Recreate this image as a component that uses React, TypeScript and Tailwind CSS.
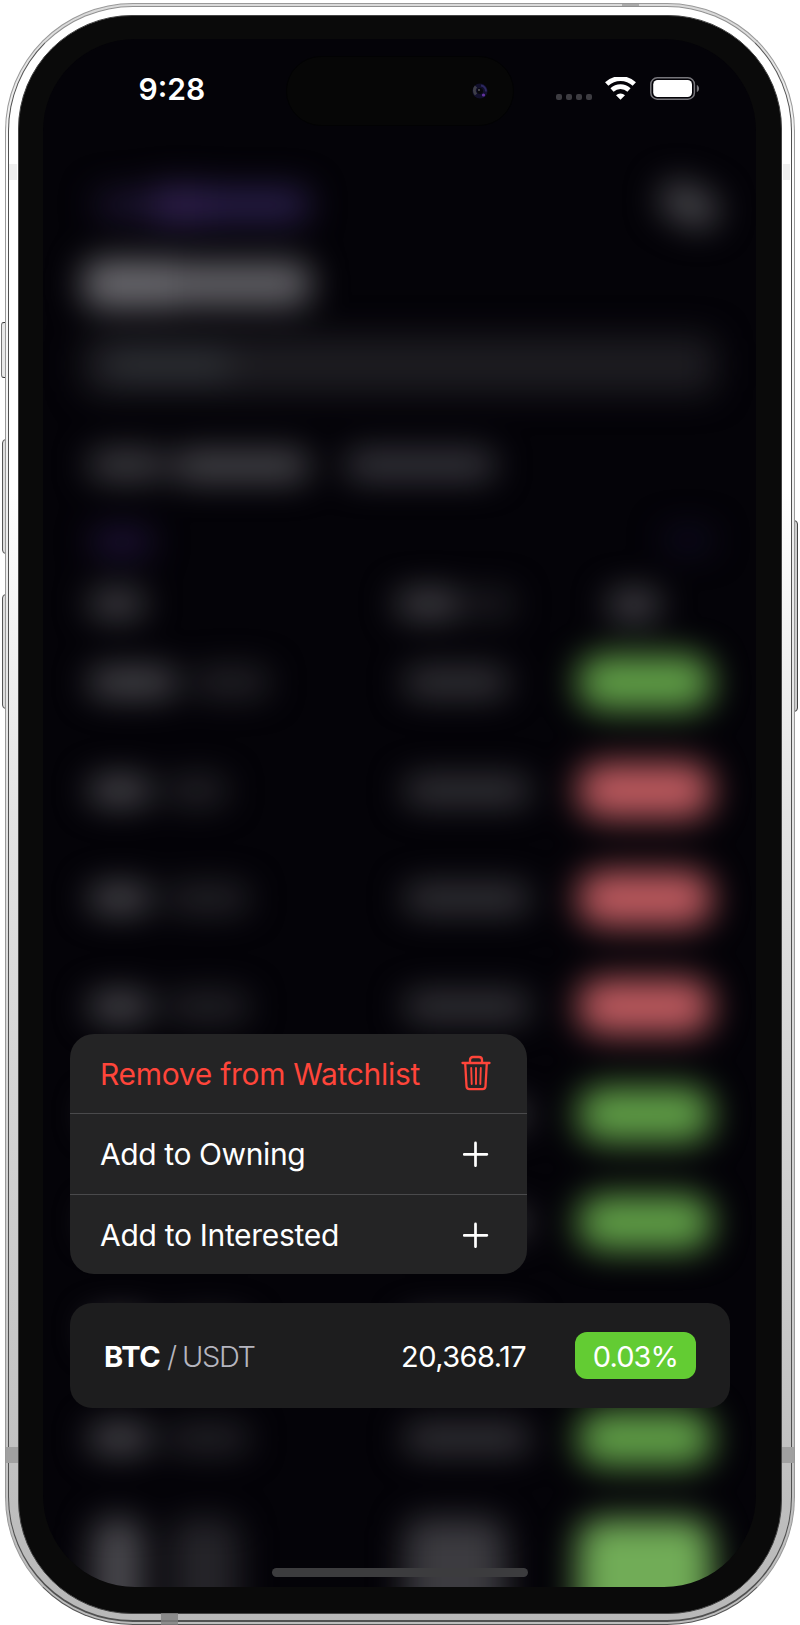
import React from "react";

const rows = [
  { a: "w-[88px]", b: "w-[76px]", p: "w-[104px]", pill: "bg-[#609e47]" },
  { a: "w-[62px]", b: "w-[60px]", p: "w-[126px]", pill: "bg-[#bd5a5f]" },
  { a: "w-[62px]", b: "w-[82px]", p: "w-[126px]", pill: "bg-[#bd5a5f]" },
  { a: "w-[62px]", b: "w-[82px]", p: "w-[126px]", pill: "bg-[#bd5a5f]" },
  { a: "w-[62px]", b: "w-[82px]", p: "w-[126px]", pill: "bg-[#609e47]" },
  { a: "w-[62px]", b: "w-[82px]", p: "w-[126px]", pill: "bg-[#609e47]" },
  { a: "w-[62px]", b: "w-[82px]", p: "w-[126px]", pill: "bg-transparent" },
  { a: "w-[62px]", b: "w-[82px]", p: "w-[126px]", pill: "bg-[#609e47]" },
];

function Market({ a, b, p, pill }: { a: string; b: string; p: string; pill: string }) {
  return (
    <div className="flex h-[108px] shrink-0 items-center pl-[46px]">
      <div className="flex w-[315px] gap-4">
        <div className={`h-[27px] rounded-xl bg-[#4f4e53] ${a}`} />
        <div className={`h-[27px] rounded-xl bg-[#27262b] ${b}`} />
      </div>
      <div className="w-[174px]">
        <div className={`h-[27px] rounded-xl bg-[#3a393e] ${p}`} />
      </div>
      <div className={`h-[55px] w-[134px] rounded-[24px] ${pill}`} />
    </div>
  );
}

function Backdrop() {
  return (
    <div className="flex h-[1700px] w-[713px] flex-col blur-[17px]">
      <div className="mt-[144px] flex h-[44px] items-center justify-between pl-[52px] pr-[37px]">
        <div className="flex h-[36px] w-[215px] items-center">
          <div className="h-[28px] w-[60px] rounded-l-2xl bg-[#1c1430]" />
          <div className="h-[38px] w-[56px] bg-[#2f204e]" />
          <div className="h-[34px] w-[106px] rounded-r-2xl bg-[#291e4a]" />
        </div>
        <div className="h-[36px] w-[60px] rotate-[25deg] rounded-2xl bg-[#47464b]" />
      </div>
      <div className="mt-[34px] flex h-[46px] items-center pl-[40px]">
        <div className="h-[48px] w-[92px] rounded-l-2xl bg-[#6b6a6f]" />
        <div className="h-[44px] w-[136px] rounded-r-2xl bg-[#636267]" />
      </div>
      <div className="mt-[29px] ml-[40px] h-[58px] w-[632px] rounded-xl bg-[#1d1c21] pl-[24px] pt-[16px]">
        <div className="h-[26px] w-[124px] rounded-xl bg-[#2f3237]" />
      </div>
      <div className="mt-[57px] flex h-[28px] gap-[36px] pl-[46px]">
        <div className="flex gap-2">
          <div className="h-[28px] w-[76px] rounded-xl bg-[#434247]" />
          <div className="h-[30px] w-[136px] rounded-xl bg-[#4b4a4f]" />
        </div>
        <div className="h-[28px] w-[150px] rounded-xl bg-[#3c3b42]" />
      </div>
      <div className="mt-[50px] flex h-[26px] justify-between pl-[48px] pr-[43px]">
        <div className="h-[26px] w-[62px] rounded-xl bg-[#1f1339]" />
        <div className="h-[22px] w-[50px] rounded-xl bg-[#0f0b22]" />
      </div>
      <div className="mt-[36px] flex h-[26px] pl-[46px]">
        <div className="h-[26px] w-[56px] rounded-xl bg-[#49484d]" />
        <div className="ml-[251px] h-[26px] w-[66px] rounded-xl bg-[#49484d]" />
        <div className="ml-[8px] h-[26px] w-[44px] rounded-xl bg-[#222126]" />
        <div className="ml-[94px] h-[28px] w-[52px] rounded-xl bg-[#49484d]" />
      </div>
      <div className="mt-[11px]">
        {rows.map((r, i) => (
          <Market key={i} {...r} />
        ))}
        <div className="flex pl-[50px] pt-[27px]">
          <div className="h-[110px] w-[50px] rounded-t-2xl bg-[#4a494e]" />
          <div className="ml-[28px] h-[110px] w-[68px] rounded-t-2xl bg-[#252429]" />
          <div className="ml-[166px] h-[110px] w-[100px] rounded-t-2xl bg-[#3c3b40]" />
          <div className="ml-[73px] h-[130px] w-[134px] rounded-[22px] bg-[#71ac57]" />
        </div>
      </div>
    </div>
  );
}

function Plus() {
  return (
    <svg className="h-[26px] w-[26px]" viewBox="0 0 26 26" fill="none" stroke="#fff" strokeWidth="2.7" strokeLinecap="round">
      <path d="M12.500 1.900v22.800M1.100 13.300h22.800" />
    </svg>
  );
}

function Trash() {
  return (
    <svg className="h-[36px] w-[30px] -translate-y-px" viewBox="0 0 30 36" fill="none" stroke="#ff453a" strokeWidth="2.3" strokeLinecap="round" strokeLinejoin="round">
      <path d="M1.500 8h27M9 7.600V5c0-1.900 1-3 3-3h6c2 0 3 1.100 3 3v2.600" />
      <path d="M4.200 8.200l1.300 23c.1 1.900 1.200 2.900 3 2.900h13c1.800 0 2.900-1 3-2.900l1.300-23" />
      <path d="M10.200 13l.5 16M15 13v16M19.800 13l-.5 16" strokeWidth="1.900" />
    </svg>
  );
}

export default function App() {
  return (
    <div className="relative h-[1625px] w-[800px] overflow-hidden bg-white font-['Inter',sans-serif]">
      <div className="absolute left-[1px] top-[322px] h-[56px] w-[6px] rounded-l-[3px] border border-[#777] border-y-[#333] bg-[#e8e8e8]" />
      <div className="absolute left-[2px] top-[439px] h-[115px] w-[6px] rounded-l-[4px] border border-[#555] bg-[#ddd]" />
      <div className="absolute left-[2px] top-[594px] h-[115px] w-[6px] rounded-l-[4px] border border-[#555] bg-[#ddd]" />
      <div className="absolute left-[793px] top-[520px] h-[192px] w-[5px] rounded-r-[4px] border border-[#444] bg-[#ccc]" />

      <div className="relative mx-auto flex h-[1622px] w-[790px] translate-y-[3px] rounded-[128px] border border-[#999] border-b-[#555] bg-linear-to-b from-[#dadada] from-1% via-white via-10% to-[#bcbcbc] to-100% p-[2px]">
        <div className="flex flex-1 rounded-[125px] border border-b-2 border-[#505050] border-t-[#909090] bg-linear-to-b from-white from-30% via-[#e3e3e3] via-50% to-[#b8b8b8] px-[9px] pb-[6px] pt-[8px]">
          <div className="flex flex-1 rounded-[114px] border border-[#444] bg-[#0a0a0a] px-[24px] pb-[25px] pt-[23px]">
            <div className="relative h-[1548px] w-[713px] overflow-hidden rounded-[92px] bg-[#040308]">
              <Backdrop />
            </div>
          </div>
        </div>
      </div>

      <div className="absolute left-[9px] top-[164px] h-[16px] w-[8px] bg-[#efefef]" />
      <div className="absolute left-[783px] top-[164px] h-[16px] w-[7px] bg-[#efefef]" />
      <div className="absolute left-[6px] top-[1447px] h-[16px] w-[12px] bg-[#a0a0a0]" />
      <div className="absolute left-[782px] top-[1447px] h-[16px] w-[12px] bg-[#a0a0a0]" />
      <div className="absolute left-[161px] top-[1613px] h-[12px] w-[17px] bg-[#808080]/80" />
      <div className="absolute left-[622px] top-[4px] h-[2px] w-[17px] bg-[#aaa]" />

      <div className="absolute left-[286px] top-[56px] flex h-[70px] w-[228px] items-center justify-end rounded-full border border-[#020203] bg-[#060606] pr-[25px]">
        <svg className="h-[16px] w-[16px]" viewBox="0 0 16 16">
          <circle cx="8" cy="8" r="7.600" fill="#12102c" />
          <path d="M9 2.500a6 6 0 0 1 5 6" stroke="#2d2860" strokeWidth="2" fill="none" />
          <path d="M4 3.500a6 6 0 0 0 0 8" stroke="#3e3e48" strokeWidth="3" fill="none" />
          <circle cx="8" cy="8" r="3" fill="#08080c" />
          <circle cx="7" cy="7" r="1" fill="#55555c" />
          <circle cx="11.500" cy="12" r="1.600" fill="#6332a0" />
        </svg>
      </div>

      <div className="absolute left-[138.500px] top-[71px] text-[30px] leading-[36px] font-semibold text-white">9:28</div>
      <div className="absolute left-[556px] top-[76px] flex h-[25px] items-start">
        <div className="mt-[18px] flex gap-[4px]">
          <i className="h-[6px] w-[6px] rounded-[2px] bg-[#3d3c41]" />
          <i className="h-[6px] w-[6px] rounded-[2px] bg-[#3d3c41]" />
          <i className="h-[6px] w-[6px] rounded-[2px] bg-[#3d3c41]" />
          <i className="h-[6px] w-[6px] rounded-[2px] bg-[#3d3c41]" />
        </div>
        <svg className="ml-[13px] mt-px h-[23px] w-[31px]" viewBox="0 0 31 23" fill="none" stroke="#fff">
          <path d="M1.700 7.100a20 20 0 0 1 27.600 0" strokeWidth="4.800" />
          <path d="M7 12.900a12.600 12.600 0 0 1 17 0" strokeWidth="4.700" />
          <path d="M15.500 22.800l-4.500-4.600a6.600 6.600 0 0 1 9 0z" fill="#fff" stroke="none" />
        </svg>
        <svg className="ml-[14px] mt-px h-[23px] w-[50px]" viewBox="0 0 50 23">
          <rect x=".8" y=".8" width="43.600" height="21.400" rx="6.500" fill="none" stroke="#77767b" strokeWidth="1.500" />
          <rect x="3.200" y="3" width="38.800" height="17" rx="4.500" fill="#fff" />
          <path d="M46.800 8c3 1 3 6 0 7z" fill="#77767b" />
        </svg>
      </div>

      <div className="absolute left-[70px] top-[1034px] flex h-[240px] w-[457px] flex-col rounded-[24px] bg-[#242425] text-[30px] text-white">
        <div className="flex h-[80px] items-center justify-between border-b border-[#4a4a4c] pl-[30px] pr-[36px] text-[#ff453a]">
          <span className="translate-y-px tracking-[-0.3px]">Remove from Watchlist</span>
          <Trash />
        </div>
        <div className="flex h-[81px] items-center justify-between border-b border-[#4a4a4c] pl-[30px] pr-[38px]">
          <span className="tracking-[-0.4px]">Add to Owning</span>
          <Plus />
        </div>
        <div className="flex h-[79px] items-center justify-between pl-[30px] pr-[38px]">
          <span className="translate-y-px tracking-[-0.3px]">Add to Interested</span>
          <Plus />
        </div>
      </div>

      <div className="absolute left-[70px] top-[1303px] flex h-[105px] w-[660px] items-center rounded-[22px] bg-[#1d1d1e] pl-[34px] text-[29px] text-white">
        <span className="w-[63px] translate-y-px font-bold tracking-[-0.4px]">BTC</span>
        <span className="w-[15px] translate-y-px font-light text-[#b5b5bf]">/</span>
        <span className="w-[185px] translate-y-px font-light tracking-[-1.3px] text-[#b5b5bf]">USDT</span>
        <span className="w-[160px] translate-y-px pl-[34px] tracking-[-0.55px]">20,368.17</span>
        <span className="ml-[48px] flex h-[47px] w-[121px] items-center justify-center rounded-[12px] bg-[#63cc33] tracking-[-0.9px]">
          <span className="translate-y-px">0.03%</span>
        </span>
      </div>

      <div className="absolute left-[272px] top-[1568px] h-[9px] w-[256px] rounded-full bg-[#3c3c3e]" />
    </div>
  );
}
